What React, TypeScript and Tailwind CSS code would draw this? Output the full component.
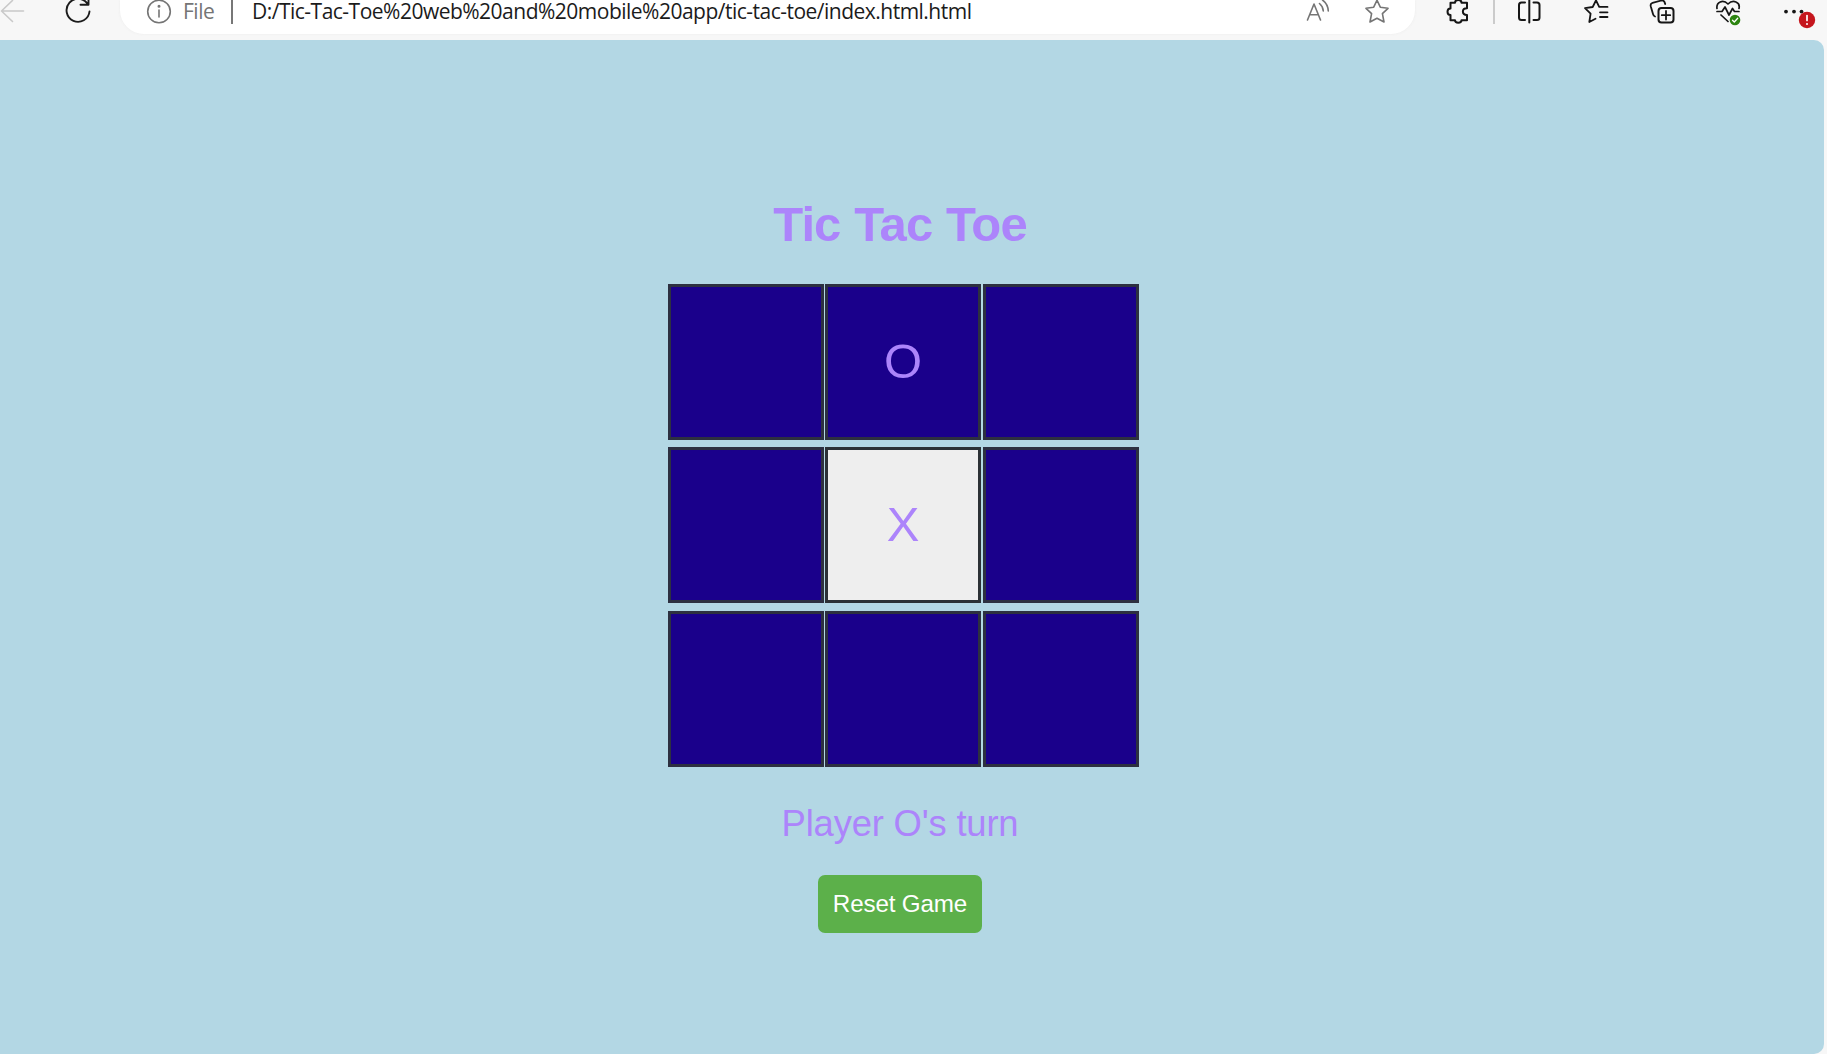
import type { ReactNode } from 'react';

type GlyphProps = { x: number; w: number; className: string; children: ReactNode };

// Toolbar glyphs share one coordinate space; each svg shows its own slice of it.
function Glyph({ x, w, className, children }: GlyphProps) {
  return (
    <svg
      width={w}
      height={34}
      viewBox={`${x} 0 ${w} 34`}
      fill="none"
      stroke="currentColor"
      strokeWidth={1.6}
      strokeLinecap="round"
      strokeLinejoin="round"
      className={`shrink-0 ${className}`}
    >
      {children}
    </svg>
  );
}

function Toolbar() {
  return (
    <header className="flex h-10 items-start overflow-hidden bg-[#f7f7f7]">
      <Glyph x={0} w={28} className="text-[#c9c9c9]">
        <path d="M12.500 0.500 1.500 11 12.500 21.500M1.500 11H23.500" />
      </Glyph>
      <Glyph x={62} w={32} className="ml-[34px] text-[#1c1c1c]">
        <path d="M88.500 -3V4.800H80.500M88 4.500A11.500 11.500 0 1 0 89.500 11.500" strokeWidth={1.9} />
      </Glyph>
      <div className="ml-[26px] flex h-[34px] w-[1295px] shrink-0 items-start rounded-b-[24px] bg-white shadow-[0_0_3px_#ececec]">
        <Glyph x={146} w={26} className="ml-[26px] text-[#757575]">
          <circle cx={159} cy={11.5} r={11.3} />
          <path d="M159 10V17" />
          <circle cx={159} cy={6.300} r={0.700} fill="currentColor" />
        </Glyph>
        <span className="ml-[11px] w-[36px] whitespace-nowrap font-['Open_Sans',sans-serif] text-[21px] leading-[23px] tracking-[-0.5px] text-[#757575]">
          File
        </span>
        <span className="ml-[12px] h-6 w-[1.500px] bg-[#777777]" />
        <span className="ml-[19.500px] grow whitespace-nowrap font-['Open_Sans',sans-serif] text-[21px] leading-[23px] tracking-[-0.510px] text-[#1b1b1b]">
          D:/Tic-Tac-Toe%20web%20and%20mobile%20app/tic-tac-toe/index.html.html
        </span>
        <Glyph x={1304} w={28} className="text-[#757575]">
          <path d="M1307.500 20 1314 4 1320.500 20M1309.700 14.800H1318.300M1319.500 3.500Q1323 6.500 1323.300 11M1322.500 0Q1328 4 1328.300 11" />
        </Glyph>
        <Glyph x={1363} w={28} className="mr-6 ml-[31px] text-[#757575]">
          <path d="M1377 0.200 1380.300 7.200 1388 8.300 1382.400 13.700 1384 22 1377 18.200 1370 22 1371.600 13.700 1366 8.300 1373.700 7.200Z" />
        </Glyph>
      </div>
      <Glyph x={1443} w={30} className="ml-7 text-[#161616]">
        <path
          strokeWidth={2}
          d="M1450.500 2.800H1455C1455 -1 1461.500 -1 1461.500 2.800H1467V8.200C1461.500 8.200 1461.500 15 1467 15V20.300H1461.500C1461.500 23.600 1455 23.600 1455 20.300H1450.500V15C1446.500 15 1446.500 8.500 1450.500 8.500Z"
        />
      </Glyph>
      <span className="ml-[20px] h-6 w-[2px] shrink-0 bg-[#cbcbcb]" />
      <Glyph x={1515} w={28} className="ml-5 text-[#161616]">
        <path strokeWidth={2} d="M1525 2.500H1521.500Q1519 2.500 1519 5V17.500Q1519 20 1521.500 20H1525M1533.500 2.500H1537Q1539.500 2.500 1539.500 5V17.500Q1539.500 20 1537 20H1533.500M1529.300 0V22.500" />
      </Glyph>
      <Glyph x={1582} w={28} className="ml-[39px] text-[#161616]">
        <path
          strokeWidth={1.8}
          d="M1600 6.800 1599.200 6.800 1596 0.300 1592.700 7 1585 8.200 1590.600 13.700 1589.300 22 1595.500 18.700M1600 6.900H1607.500M1600 12.300H1607.500M1600 17H1607.500"
        />
      </Glyph>
      <Glyph x={1648} w={28} className="ml-[38px] text-[#161616]">
        <rect x={1658.500} y={8} width={15} height={14.500} rx={3} strokeWidth={2} />
        <path strokeWidth={1.8} d="M1666 11V19.500M1661.800 15.200H1670.200M1655 16.500Q1653.500 16 1653 14L1650.800 6.500Q1650 3.500 1652.500 2.800L1661.500 0.500Q1664.500 0 1665.200 4" />
      </Glyph>
      <Glyph x={1714} w={30} className="ml-[38px] text-[#161616]">
        <path
          strokeWidth={1.7}
          d="M1717 8.500C1716 2 1723 -1 1728 4C1733 -1 1740.500 2 1739 8.500M1717 11.500H1722L1725 7 1729 15 1732.500 8.500 1734.500 11.500H1739M1721 15 1728 21.500"
        />
        <circle cx={1735} cy={20} r={5.300} fill="#2c8410" stroke="none" />
        <path d="M1732.500 20.200 1734.300 22 1737.700 18.200" stroke="#fff" strokeWidth={1.3} />
      </Glyph>
      <Glyph x={1782} w={36} className="ml-[38px] text-[#161616]">
        <g fill="currentColor" stroke="none">
          <circle cx={1786} cy={11.600} r={1.900} />
          <circle cx={1794} cy={11.600} r={1.900} />
          <circle cx={1801.500} cy={11.600} r={1.900} />
        </g>
        <circle cx={1807} cy={20} r={8.200} fill="#c5161d" stroke="none" />
        <path d="M1807 15.500V20.500" stroke="#fff" strokeWidth={1.7} />
        <circle cx={1807} cy={24} r={1} fill="#fff" stroke="none" />
      </Glyph>
    </header>
  );
}

const cells = ['', 'O', '', '', 'X', '', '', '', ''];

export default function App() {
  return (
    <div className="h-[1054px] w-[1827px] overflow-hidden bg-[#f7f7f7]">
      <Toolbar />
      <main className="flex h-[1014px] w-[1824px] flex-col items-center rounded-r-[10px] bg-[#b3d7e4] pr-6 font-['Liberation_Sans',Arial,sans-serif]">
        <h1 className="mt-[156px] text-[49px] leading-[56px] font-bold tracking-[-0.900px] [word-spacing:1px] text-[#ac84fb]">Tic Tac Toe</h1>
        <div className="mt-8 ml-[7px] grid grid-cols-[157px_158px_156px] grid-rows-[163px_164px_156px]">
          {cells.map((mark, i) => (
            <div
              key={i}
              className={`flex size-[156px] items-center justify-center border-[3px] pb-[1px] text-[49px] leading-none text-[#ac84fb] ${
                mark === 'X' ? 'border-[#2b3035] bg-[#eeeeee]' : 'border-[#2d3040] bg-[#1a008b]'
              }`}
            >
              {mark}
            </div>
          ))}
        </div>
        <p className="mt-9 text-[36.400px] leading-[42px] tracking-[-0.180px] text-[#ac84fb]">Player O's turn</p>
        <button className="mt-[30px] h-[58px] w-[164px] rounded-[7px] bg-[#5cb04a] text-[24.200px] leading-none tracking-[-0.150px] whitespace-nowrap text-white">
          Reset Game
        </button>
      </main>
    </div>
  );
}
